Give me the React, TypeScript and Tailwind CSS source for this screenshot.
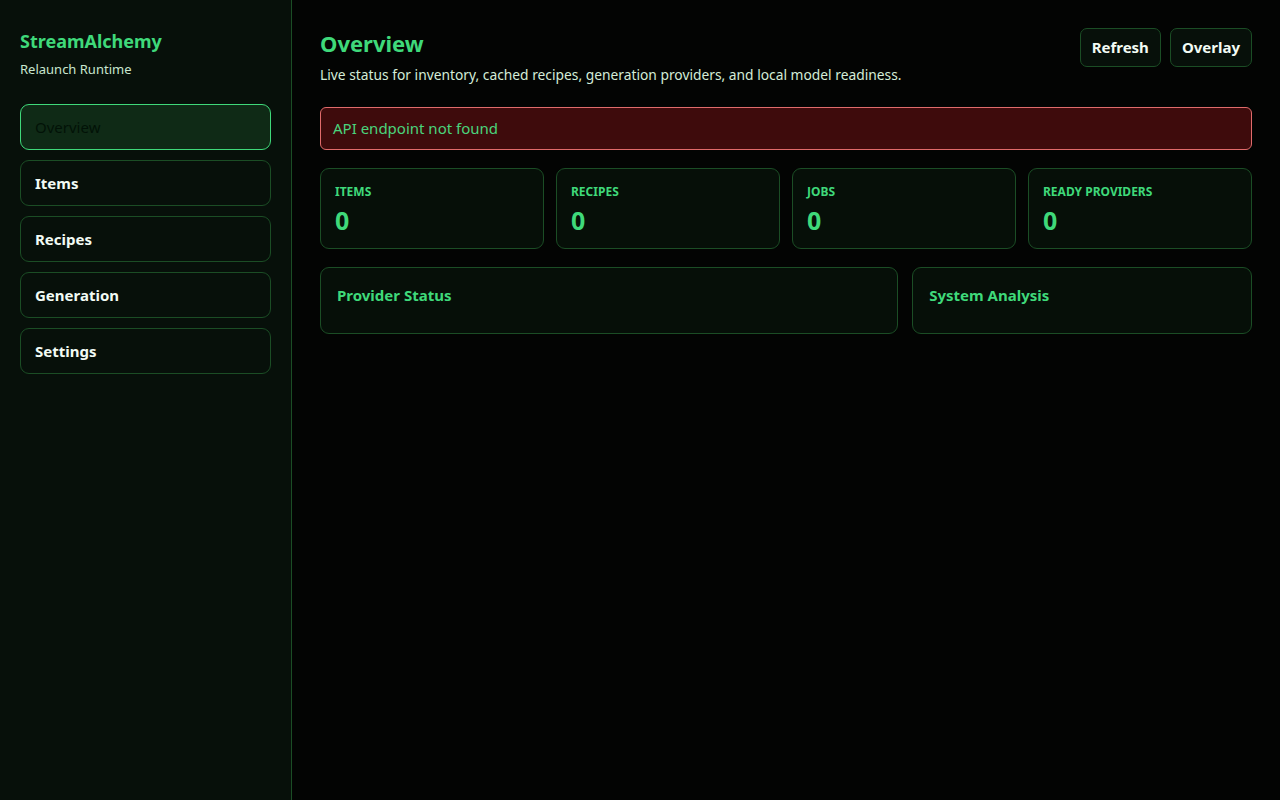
import { FC } from 'react'

const NAV = ['Overview', 'Items', 'Recipes', 'Generation', 'Settings']

const STATS = [
	{ label: 'Items', value: 0 },
	{ label: 'Recipes', value: 0 },
	{ label: 'Jobs', value: 0 },
	{ label: 'Ready Providers', value: 0 },
]

const Sidebar: FC = () => {
	const active = 'Overview'
	return (
		<aside className="flex w-[292px] shrink-0 flex-col border-r border-[#1b4d25] bg-[#07100a] px-5 pt-[30px]">
			<div className="text-[18px] font-bold leading-[22px] text-[#3fd97a]">StreamAlchemy</div>
			<div className="mt-[9px] text-[13px] leading-[16px] text-[#c9e6cf]">Relaunch Runtime</div>
			<nav className="mt-[27px] flex flex-col gap-[10px]">
				{NAV.map((item) => (
					<div
						key={item}
						className={`flex h-[46px] items-center rounded-[9px] border px-[14px] text-[15px] ${
							item === active
								? 'border-[#3fd97a] bg-[#0f2a16] font-normal text-[#021207]'
								: 'border-[#1b4d25] bg-[#07100a] font-bold text-[#f2fbf4]'
						}`}
					>
						{item}
					</div>
				))}
			</nav>
		</aside>
	)
}

export default function App() {
	return (
		<div
			className="flex min-h-screen bg-[#030403]"
			style={{ fontFamily: '"Noto Sans", "Open Sans", sans-serif' }}
		>
			<Sidebar />
			<main className="flex-1 px-[28px] pt-[28px]">
				<div className="flex items-start justify-between">
					<div>
						<h1 className="mt-[1px] text-[22px] font-bold leading-[28px] text-[#3fd97a]">Overview</h1>
						<p className="mt-[9px] text-[13.8px] leading-[18px] text-[#d4ecd8]">
							Live status for inventory, cached recipes, generation providers, and local model readiness.
						</p>
					</div>
					<div className="flex gap-[9px]">
						<button className="h-[39px] rounded-[7px] border border-[#1b4d25] bg-[#07100a] px-[11px] text-[15px] font-bold text-[#f2fbf4]">
							Refresh
						</button>
						<button className="h-[39px] rounded-[7px] border border-[#1b4d25] bg-[#07100a] px-[11px] text-[15px] font-bold text-[#f2fbf4]">
							Overlay
						</button>
					</div>
				</div>

				<div className="mt-[23px] flex h-[43px] items-center rounded-[6px] border border-[#e06b6b] bg-[#3e0b0c] px-[12px] text-[15px] text-[#4ad47c]">
					API endpoint not found
				</div>

				<div className="mt-[18px] grid grid-cols-4 gap-3">
					{STATS.map((s) => (
						<div
							key={s.label}
							className="flex h-[81px] flex-col rounded-[9px] border border-[#1b4d25] bg-[#060f08] px-[14px] pt-[15px]"
						>
							<div className="text-[12px] font-bold uppercase leading-[16px] text-[#3fd97a]">{s.label}</div>
							<div className="mt-[5px] text-[25px] font-bold leading-[30px] text-[#3fd97a]">{s.value}</div>
						</div>
					))}
				</div>

				<div className="mt-[18px] grid grid-cols-[577fr_339fr] gap-[14px]">
					<section className="h-[67px] rounded-[9px] border border-[#1b4d25] bg-[#060f08] px-4 pt-[17px]">
						<h2 className="text-[15px] font-bold leading-[20px] text-[#3fd97a]">Provider Status</h2>
					</section>
					<section className="h-[67px] rounded-[9px] border border-[#1b4d25] bg-[#060f08] px-4 pt-[17px]">
						<h2 className="text-[15px] font-bold leading-[20px] text-[#3fd97a]">System Analysis</h2>
					</section>
				</div>
			</main>
		</div>
	)
}
